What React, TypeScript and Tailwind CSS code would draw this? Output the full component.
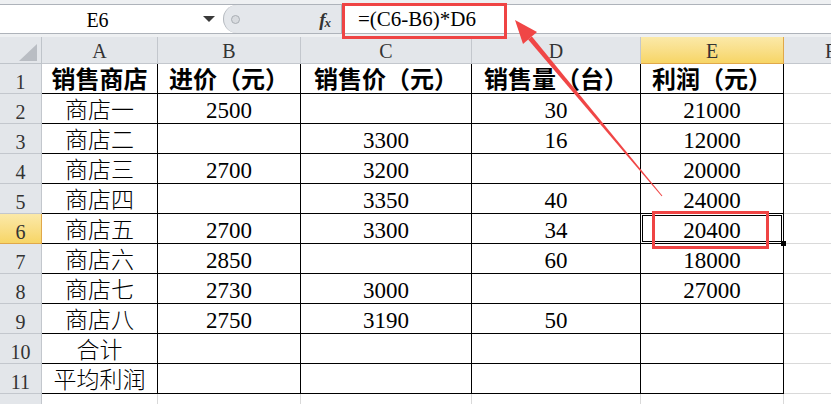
import React from "react";

const rows: string[][] = [
  ["销售商店", "进价（元）", "销售价（元）", "销售量（台）", "利润（元）"],
  ["商店一", "2500", "", "30", "21000"],
  ["商店二", "", "3300", "16", "12000"],
  ["商店三", "2700", "3200", "", "20000"],
  ["商店四", "", "3350", "40", "24000"],
  ["商店五", "2700", "3300", "34", "20400"],
  ["商店六", "2850", "", "60", "18000"],
  ["商店七", "2730", "3000", "", "27000"],
  ["商店八", "2750", "3190", "50", ""],
  ["合计", "", "", "", ""],
  ["平均利润", "", "", "", ""],
];

const cols = ["A", "B", "C", "D", "E"];

export default function App() {
  return (
    <div className="relative w-[831px] h-[404px] overflow-hidden bg-white text-black font-['Liberation_Serif','Times_New_Roman','Noto_Sans_CJK_SC',serif]">
      {/* Formula bar */}
      <div className="h-[37px] bg-[#eef0f2] pt-[4px] pb-[3px]">
        <div className="flex h-[30px] border-y border-[#aeb3ba] bg-white">
          <div className="w-[195px] flex items-center justify-center text-[20px] leading-none pt-[1px]">
            E6
          </div>
          <div className="w-[28px] flex items-center justify-center">
            <div className="w-0 h-0 border-l-[6px] border-r-[6px] border-t-[6px] border-l-transparent border-r-transparent border-t-[#3a3a3a]" />
          </div>
          <div className="w-[118px] flex items-center bg-[#e4e7eb] rounded-l-[15px] border-l border-[#b3b8be] relative">
            <div className="ml-[7px] w-[9px] h-[9px] rounded-full bg-[#d8dbdf] border border-[#a9aeb4]" />
            <div className="ml-auto mr-[10px] flex items-end leading-none text-[#333]">
              <span className="italic font-bold text-[19px]">f</span>
              <span className="italic font-bold text-[13px] -ml-[1px]">x</span>
            </div>
          </div>
          <div className="flex-1 flex items-center pl-[16px] text-[21px] leading-none border-l border-[#aeb3ba] pt-[1px]">
            =(C6-B6)*D6
          </div>
        </div>
      </div>

      {/* Grid */}
      <div className="grid grid-cols-[42px_116px_143px_171px_169px_143px_1fr] grid-rows-[27px_repeat(11,30px)_10px]">
        {/* Header row */}
        <div className="relative bg-[#e3e6ea] border-r border-b border-[#bfc4ca]">
          <svg className="absolute right-[4px] bottom-[2px]" width="18" height="17">
            <polygon points="18,0 18,17 0,17" fill="#b9bdc3" />
          </svg>
        </div>
        {cols.map((c) =>
          c === "E" ? (
            <div
              key={c}
              className="flex items-end justify-center pb-[2px] text-[20px] leading-none text-[#333] bg-gradient-to-b from-[#fbe9a8] to-[#f7d565] border-r border-b border-[#e0a84a]"
            >
              {c}
            </div>
          ) : (
            <div
              key={c}
              className="flex items-end justify-center pb-[2px] text-[20px] leading-none text-[#333] bg-[#e3e6ea] border-r border-b border-[#c3c7cd]"
            >
              {c}
            </div>
          )
        )}
        <div className="flex items-end pl-[41px] pb-[2px] text-[20px] leading-none text-[#333] bg-[#e3e6ea] border-b border-[#c3c7cd] overflow-hidden">
          F
        </div>

        {/* Data rows */}
        {rows.map((r, i) => (
          <React.Fragment key={i}>
            <div
              className={
                i === 5
                  ? "flex items-end justify-center pb-[1px] text-[20px] leading-none text-[#333] bg-gradient-to-b from-[#fbe9a8] to-[#f7d565] border-r border-b border-[#e0a84a]"
                  : "flex items-end justify-center pb-[1px] text-[20px] leading-none text-[#333] bg-[#e3e6ea] border-r border-b border-[#c3c7cd]"
              }
            >
              {i + 1}
            </div>
            {r.map((v, j) => (
              <div
                key={j}
                className={
                  i === 0
                    ? "relative flex items-end justify-center pb-[1px] text-[24px] font-bold leading-none border-r border-b border-black whitespace-nowrap"
                    : "relative flex items-end justify-center pb-[1px] text-[23px] font-light leading-none border-r border-b border-black whitespace-nowrap"
                }
              >
                {v}
                {i === 5 && j === 4 && (
                  <>
                    <div className="absolute -left-[1px] -top-[1px] -right-[1px] -bottom-[1px] border-[3px] border-double border-black" />
                    <div className="absolute -right-[3px] -bottom-[3px] w-[5px] h-[5px] bg-black" />
                  </>
                )}
              </div>
            ))}
            <div className="border-b border-[#d9d9d9]" />
          </React.Fragment>
        ))}

        {/* Partial row 12 */}
        <div className="bg-[#e3e6ea] border-r border-[#c3c7cd]" />
        {cols.map((c) => (
          <div key={c} className="border-r border-[#d9d9d9]" />
        ))}
        <div />
      </div>

      {/* Red annotation boxes */}
      <div className="absolute left-[342px] top-[3px] w-[165px] h-[36px] border-[3px] border-[#ef4444]" />
      <div className="absolute left-[652px] top-[211px] w-[117px] h-[38px] border-[3px] border-[#ef4444]" />

      {/* Arrow */}
      <svg className="absolute inset-0 pointer-events-none" width="831" height="404">
        <polygon
          points="662.4,195.7 661.6,196.3 528.1,39.6 531.9,36.4"
          fill="#f04646"
        />
        <polygon points="515,20 537,32 523,44" fill="#f04646" />
      </svg>
    </div>
  );
}
